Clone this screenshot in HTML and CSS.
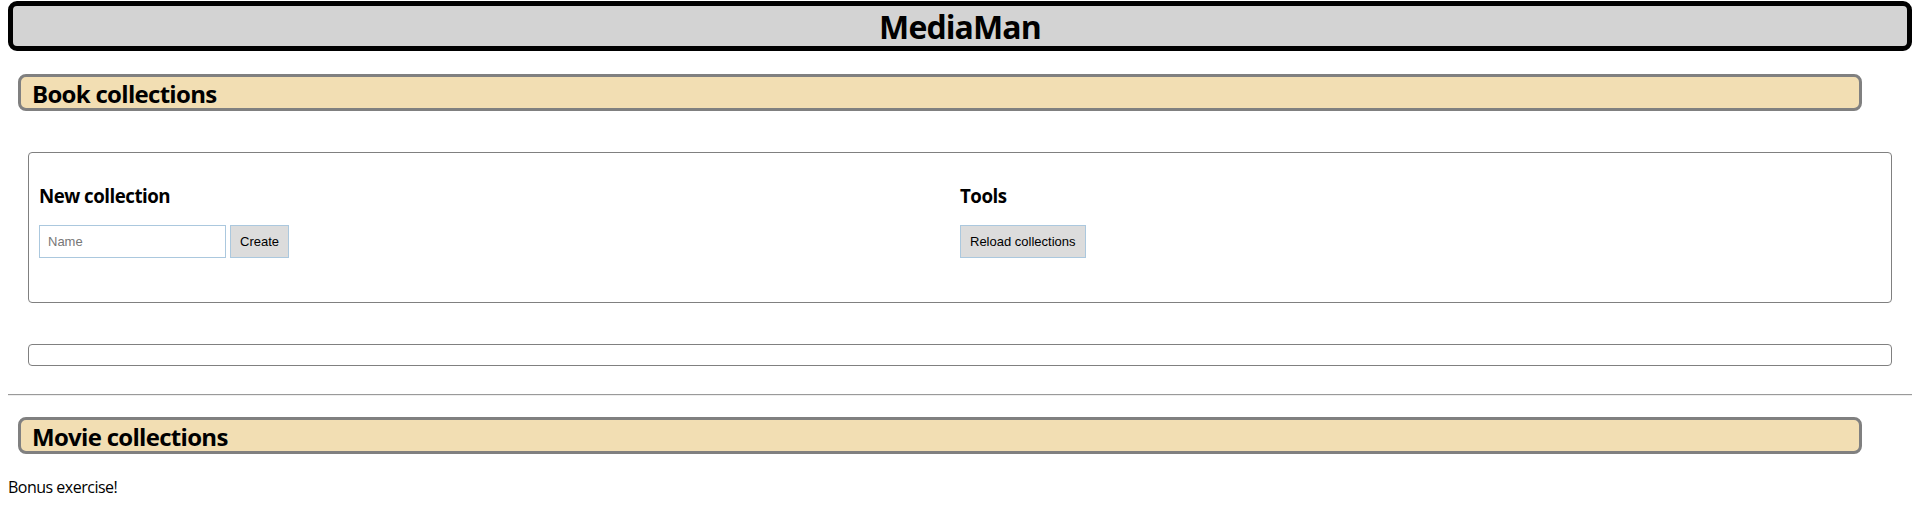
FILE: index.html
```html
<!DOCTYPE html>
<html lang="en">
<head>
<meta charset="utf-8">
<title>MediaMan</title>
<link rel="stylesheet" href="styles.css">
</head>
<body>
<header class="app-header">
  <h1 class="app-title">MediaMan</h1>
</header>
<section class="media-section">
  <h2 class="section-bar">Book collections</h2>
  <div class="card controls">
    <div class="control-col">
      <h3 class="col-title">New collection</h3>
      <div class="form-row">
        <input class="text-input" type="text" placeholder="Name">
        <button class="btn" type="button">Create</button>
      </div>
    </div>
    <div class="control-col">
      <h3 class="col-title">Tools</h3>
      <div class="form-row">
        <button class="btn" type="button">Reload collections</button>
      </div>
    </div>
  </div>
  <div class="card empty-list"></div>
</section>
<hr class="divider">
<section class="media-section">
  <h2 class="section-bar section-bar-last">Movie collections</h2>
  <p class="note">Bonus exercise!</p>
</section>
</body>
</html>
```

FILE: styles.css
```css
html, body {
  background: #fff;
}
body {
  margin: 0;
  padding: 1px 8px 8px;
  font-family: "Open Sans", "Noto Sans", sans-serif;
  color: #000;
  letter-spacing: -0.5px;
}
.app-header {
  margin: 0 0 23px;
  background: #d3d3d3;
  border: 5px solid #000;
  border-radius: 9px;
}
.app-title {
  margin: 0;
  padding-top: 1px;
  font-size: 32px;
  line-height: 39px;
  font-weight: 700;
  letter-spacing: -0.9px;
  text-align: center;
}
.section-bar {
  margin: 0 50px 41px 10px;
  background: #f2deb3;
  border: 3px solid #808080;
  border-radius: 8px;
  padding: 2px 11px 0;
  font-size: 24px;
  line-height: 29px;
  font-weight: 700;
  letter-spacing: -0.7px;
}
.section-bar-last {
  margin-bottom: 22px;
}
.card {
  margin: 0 20px;
  border: 1px solid #808080;
  border-radius: 4px;
}
.controls {
  display: grid;
  grid-template-columns: 1fr 1fr;
  padding: 30px 10px 44px;
}
.col-title {
  margin: 0 0 17px;
  font-size: 18.72px;
  line-height: 25px;
  font-weight: 700;
}
.form-row {
  display: flex;
  gap: 4px;
  letter-spacing: 0;
}
.text-input {
  box-sizing: border-box;
  width: 187px;
  height: 33px;
  margin: 0;
  padding: 0 8px;
  border: 1px solid #abc8de;
  font-family: "Liberation Sans", Arial, sans-serif;
  font-size: 13px;
  color: #000;
  outline: none;
}
.text-input::placeholder {
  color: #777;
}
.btn {
  box-sizing: border-box;
  height: 33px;
  margin: 0;
  padding: 0 9px;
  background: #dcdcdc;
  border: 1px solid #abc8de;
  font-family: "Liberation Sans", Arial, sans-serif;
  font-size: 13px;
  color: #000;
}
.empty-list {
  margin-top: 41px;
  height: 20px;
}
.divider {
  margin: 28px 0 21px;
  border: 0;
  border-top: 1px solid #9a9a9a;
  border-bottom: 1px solid #eee;
}
.note {
  margin: 0;
  font-size: 16px;
  line-height: 22px;
}
```
